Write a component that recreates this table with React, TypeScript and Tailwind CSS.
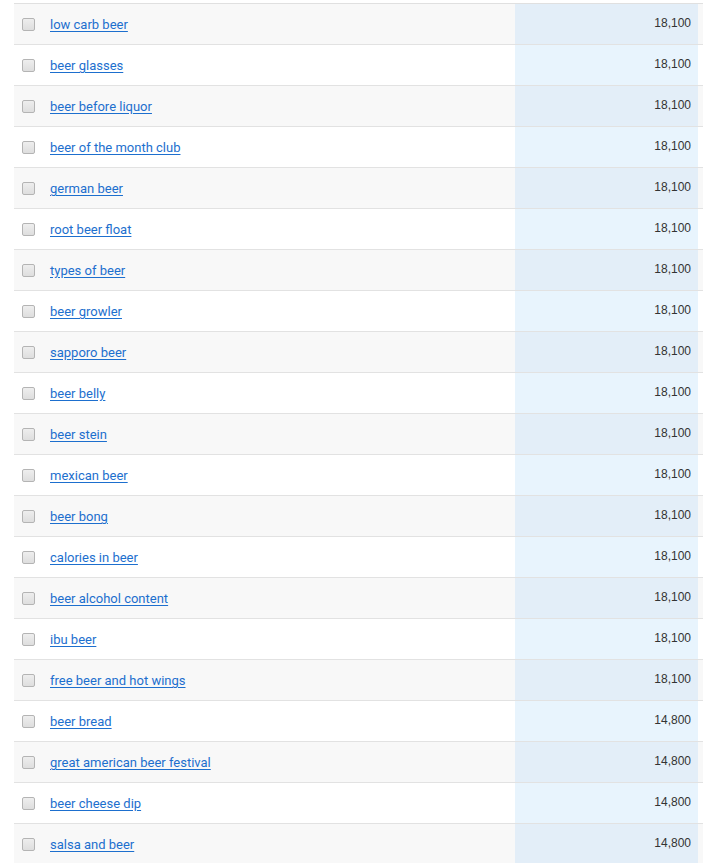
const keywords = [
  { term: "low carb beer", volume: "18,100" },
  { term: "beer glasses", volume: "18,100" },
  { term: "beer before liquor", volume: "18,100" },
  { term: "beer of the month club", volume: "18,100" },
  { term: "german beer", volume: "18,100" },
  { term: "root beer float", volume: "18,100" },
  { term: "types of beer", volume: "18,100" },
  { term: "beer growler", volume: "18,100" },
  { term: "sapporo beer", volume: "18,100" },
  { term: "beer belly", volume: "18,100" },
  { term: "beer stein", volume: "18,100" },
  { term: "mexican beer", volume: "18,100" },
  { term: "beer bong", volume: "18,100" },
  { term: "calories in beer", volume: "18,100" },
  { term: "beer alcohol content", volume: "18,100" },
  { term: "ibu beer", volume: "18,100" },
  { term: "free beer and hot wings", volume: "18,100" },
  { term: "beer bread", volume: "14,800" },
  { term: "great american beer festival", volume: "14,800" },
  { term: "beer cheese dip", volume: "14,800" },
  { term: "salsa and beer", volume: "14,800" },
];

export default function App() {
  return (
    <div className="h-[863px] overflow-hidden bg-white pl-[14px] pt-[3px]">
      <div className="border-t border-[#e0e0e0]">
        {keywords.map((kw, index) => {
          const striped = index % 2 === 0;
          return (
            <div
              key={kw.term}
              className={`flex h-[41px] border-b border-[#e2e2e2] ${striped ? "bg-[#f8f8f8]" : "bg-white"}`}
            >
              {/* keyword cell */}
              <div className="flex flex-1 items-center pl-[8px]">
                <span className="mr-[15px] block h-[13px] w-[13px] rounded-[2px] border border-[#b4b4b4] bg-gradient-to-b from-[#eeeeee] to-[#dedede]" />
                <a
                  href="#"
                  className="pt-[1px] text-[13px] leading-[15px] text-[#1d6fce] underline underline-offset-2"
                  style={{ fontFamily: "Roboto, 'Noto Sans', sans-serif" }}
                >
                  {kw.term}
                </a>
              </div>
              {/* volume cell */}
              <div
                className={`w-[183px] pr-[7px] pt-[12px] text-right text-[12px] leading-[14px] text-[#333333] ${striped ? "bg-[#e3eef8]" : "bg-[#e8f4fd]"}`}
                style={{ fontFamily: "'Liberation Sans', Arial, sans-serif" }}
              >
                {kw.volume}
              </div>
              <div className="w-[5px]" />
            </div>
          );
        })}
      </div>
    </div>
  );
}
